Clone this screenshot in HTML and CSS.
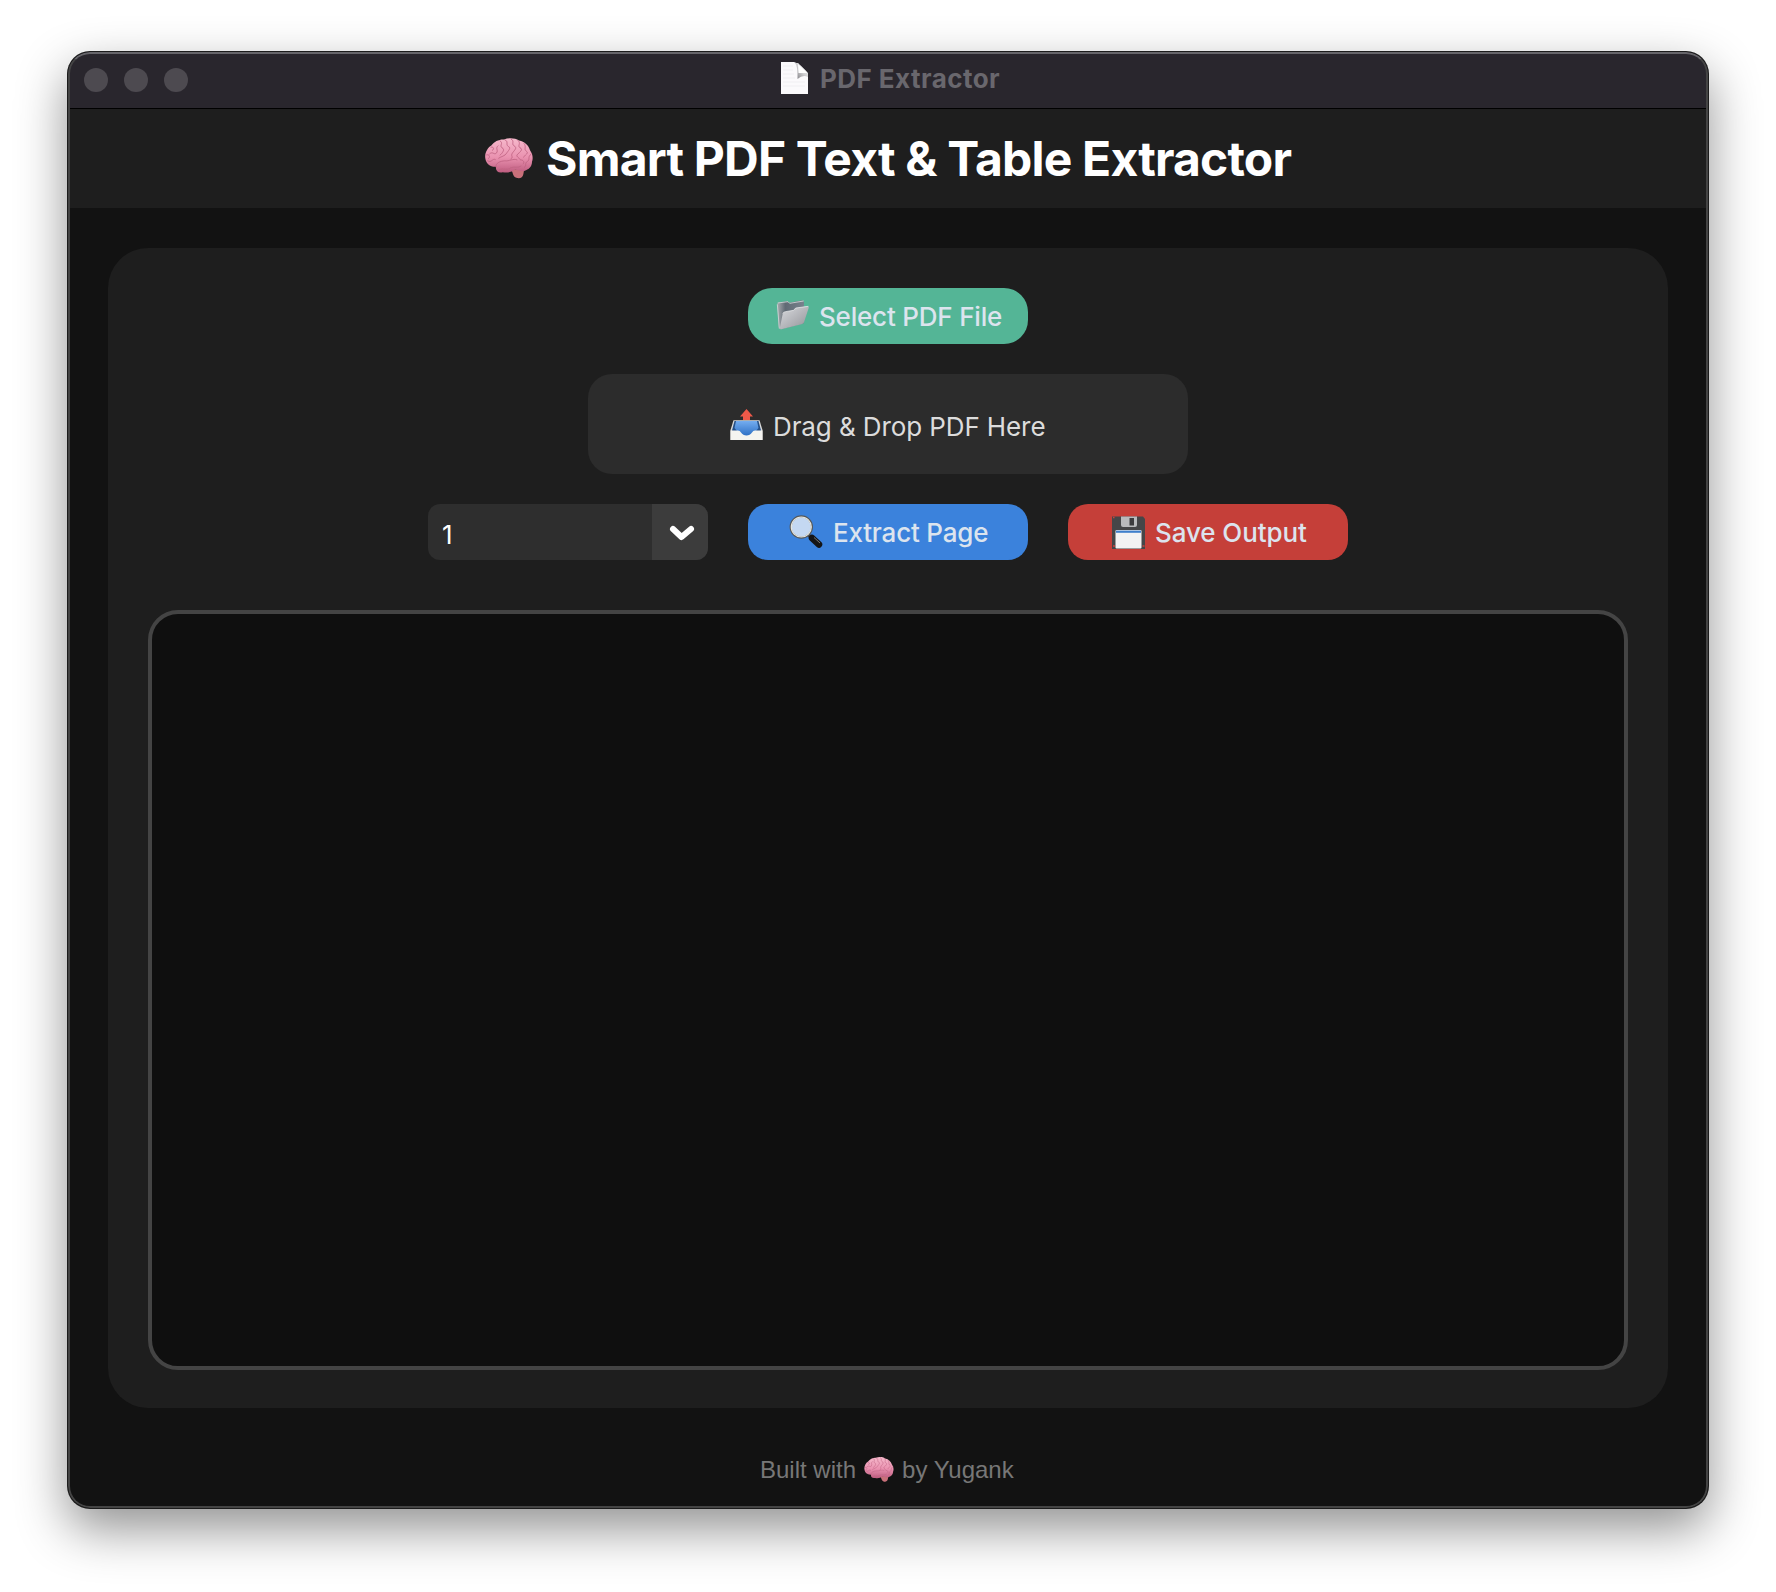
FILE: index.html
```html
<!DOCTYPE html>
<html lang="en">
<head>
<meta charset="utf-8">
<title>PDF Extractor</title>
<link rel="stylesheet" href="styles.css">
</head>
<body>
<svg width="0" height="0" class="defs" aria-hidden="true">
  <defs>
    <linearGradient id="brainFill" x1="0" y1="0" x2="0" y2="1"><stop offset="0" stop-color="#f6b9cc"/><stop offset=".55" stop-color="#ea92b0"/><stop offset="1" stop-color="#bf5d80"/></linearGradient>
    <symbol id="brain" viewBox="0 0 144 122">
      <path d="M78 94C85 104 83 115 94 119C105 123 113 118 115 108L118 92Z" fill="#c9707a"/>
      <path d="M1 61C-2 45 8 28 19 22C28 10 42 3 57 4C72-2 91 0 102 7C119 10 131 22 135 36C143 47 145 60 141 71C141 83 134 93 123 96C113 102 101 97 91 94C78 102 68 105 53 102C40 105 31 98 33 86C15 87 3 76 1 61Z" fill="url(#brainFill)"/>
      <path d="M33 86C31 75 45 69 59 68C72 70 84 60 96 65M41 96C52 87 65 99 77 89C88 84 98 91 108 84M8 68C20 76 22 59 31 64M14 47C23 38 26 51 34 45C42 35 29 32 39 23M45 8C57 15 42 22 51 29C61 33 53 44 45 51M60 5C72 10 61 18 70 25C80 29 69 38 65 45C60 54 48 55 41 60M79 3C90 9 78 17 87 23C99 29 87 37 82 45C76 54 87 56 78 62M99 7C110 16 96 22 105 29C116 33 104 43 98 48C91 55 101 57 105 63M117 16C126 26 115 33 124 39C133 45 119 50 116 57M138 48C126 57 137 64 127 70C117 76 127 81 118 88M106 65C115 65 119 71 115 77M18 27C27 25 28 33 22 37M5 50C14 47 16 58 11 61" fill="none" stroke="#c06584" stroke-width="2.600" stroke-linecap="round"/>
    </symbol>
  </defs>
</svg>
<main class="window">
  <div class="titlebar">
    <div class="lights"><i></i><i></i><i></i></div>
    <div class="caption">
      <svg class="page-icon" viewBox="0 0 27 32"><defs><linearGradient id="fold" x1="0" y1="1" x2="1" y2="0"><stop offset="0" stop-color="#77767a"/><stop offset=".5" stop-color="#cfcfd1"/><stop offset="1" stop-color="#fff"/></linearGradient></defs><path d="M0 0H13Q17 1 20 4L25 9Q27 11 27 15V32H0Z" fill="#fbfafc"/><path d="M14 1Q17 4 16.500 17Q22 12 27 15V11L17 1Z" fill="url(#fold)"/><path d="M17 2L26.500 11H17.500Z" fill="#fff"/><path d="M2 4H12M2 8H12M2 12H13M2 16H14M2 20H24M2 24H24" stroke="#f0eff2" stroke-width="1"/></svg>
      <span class="caption-text">PDF Extractor</span>
    </div>
  </div>
  <header class="header">
    <svg class="brain-lg"><use href="#brain"/></svg>
    <h1>Smart PDF Text &amp; Table Extractor</h1>
  </header>
  <section class="card">
    <button class="btn btn-select">
      <svg class="folder" viewBox="0 0 96 90"><defs><linearGradient id="ff" x1="0" y1="0" x2="1" y2="1"><stop offset="0" stop-color="#d9dade"/><stop offset="1" stop-color="#929398"/></linearGradient><linearGradient id="fb" x1="0" y1="0" x2="1" y2="0"><stop offset="0" stop-color="#a9abaf"/><stop offset=".3" stop-color="#606a74"/><stop offset="1" stop-color="#78838d"/></linearGradient></defs><path d="M1 13Q1 8 7 7L31 4L37 8L75 1Q81 1 81 7V70L11 88Q6 87 5 80Z" fill="url(#fb)"/><path d="M1 13L7 86M2 9L33 5L38 10L80 3" fill="none" stroke="#d3d7da" stroke-width="2.500"/><path d="M17 42Q19 36 25 35L50 31L56 24L91 19Q97 18 95 24L81 67Q79 72 73 73L13 88Q8 89 9 82Z" fill="url(#ff)"/><path d="M17 41Q19 36 25 35L50 31L56 24L94 19" fill="none" stroke="#f0f0f2" stroke-width="2"/></svg>
      <span>Select PDF File</span>
    </button>
    <div class="dropzone">
      <svg class="tray" viewBox="0 0 33 31"><defs><linearGradient id="tb" x1="0" y1="0" x2="0" y2="1"><stop offset="0" stop-color="#74adf0"/><stop offset="1" stop-color="#2d6fc4"/></linearGradient></defs><path d="M3.500 11.300H29.500L32.500 21V31H.500V21Z" fill="#d8d9d9"/><path d="M4.500 12H28.500L31 21.500L24 27H9L2 21.500Z" fill="#244f86"/><path d="M6 12H27L28.500 19L22 27H11L4.500 19Z" fill="url(#tb)"/><path d="M.500 21.500H8Q10 21.500 11 23.500Q13 26.500 16.500 26.500Q20 26.500 22 23.500Q23 21.500 25 21.500H32.500V31H.500Z" fill="#f5f4f0"/><path d="M16.500 0L23 7.500H20V11H13V7.500H10Z" fill="#ee5949"/></svg>
      <span>Drag &amp; Drop PDF Here</span>
    </div>
    <div class="controls">
      <div class="combo">
        <span class="combo-value">1</span>
        <span class="combo-arrow"><svg viewBox="0 0 24 14"><path d="M3 3L11.500 11L21 3" fill="none" stroke="#fff" stroke-width="6" stroke-linecap="round" stroke-linejoin="round"/></svg></span>
      </div>
      <button class="btn btn-extract">
        <svg class="lens" viewBox="0 0 34 34"><path d="M19.500 20L23.500 23.500" stroke="#3c3d3e" stroke-width="3"/><path d="M23 23L30 29.500" stroke="#151515" stroke-width="6.500" stroke-linecap="round"/><path d="M25 22.500L31 28" stroke="#777" stroke-width="1"/><circle cx="12.300" cy="12" r="10.700" fill="#c4d8f2" stroke="#55585a" stroke-width="2"/><circle cx="12.300" cy="12" r="10" fill="none" stroke="#e6e6df" stroke-width="1.200"/></svg>
        <span>Extract Page</span>
      </button>
      <button class="btn btn-save">
        <svg class="floppy" viewBox="0 0 33 33"><path d="M0 .500H31L33 3V33H0Z" fill="#454648"/><path d="M9 .500H25V9Q25 11 23 11H11Q9 11 9 9Z" fill="#b9babc"/><rect x="17.500" y="2" width="4.500" height="7.500" fill="#3c3c3e"/><rect x="3.500" y="14" width="26" height="18.500" rx="1" fill="#f3f3f3"/><path d="M4 15.700H29" stroke="#3f7fcb" stroke-width="2.200"/><path d="M1 30H3M30.500 30H32.500M1 1.500H2.500" stroke="#c9423c" stroke-width="1.500"/></svg>
        <span>Save Output</span>
      </button>
    </div>
    <div class="output"></div>
  </section>
  <footer class="footer">
    <span>Built with</span>
    <svg class="brain-sm"><use href="#brain"/></svg>
    <span>by Yugank</span>
  </footer>
</main>
</body>
</html>
```

FILE: styles.css
```css
* { box-sizing: border-box; }
body {
  margin: 0;
  padding: 52px 68px 84px;
  background: #fff;
  font-family: Inter, "Liberation Sans", sans-serif;
  font-size: 26px;
}
.defs { position: absolute; }
svg { display: block; flex: none; overflow: visible; }
span, h1 { white-space: nowrap; }
.window {
  position: relative;
  display: flex;
  flex-direction: column;
  width: 1640px;
  height: 1456px;
  border-radius: 22px;
  background: #121212;
  box-shadow: 0 0 0 1px #1c1c1c, 0 20px 50px 1px rgba(0, 0, 0, .43);
  overflow: hidden;
}
.window::after {
  content: "";
  position: absolute;
  inset: 0;
  border: 2px solid #444;
  border-top-color: #66656a;
  border-radius: 22px;
  pointer-events: none;
}
.titlebar {
  display: flex;
  height: 57px;
  padding: 0 16px;
  background: #29262d;
  border-bottom: 1px solid #000;
}
.lights { display: flex; gap: 16px; width: 697px; padding-top: 16px; }
.lights i { width: 24px; height: 24px; border-radius: 50%; background: #4d4a50; }
.caption { display: flex; gap: 12px; padding-top: 10px; }
.page-icon { width: 27px; height: 32px; }
.caption-text { padding-top: 1px; font-weight: 700; line-height: 32px; letter-spacing: .45px; color: #69676d; }
.header {
  display: flex;
  height: 99px;
  padding-left: 417px;
  background: #1e1e1e;
}
.brain-lg { width: 48px; height: 41px; margin-top: 29px; }
h1 { margin: 20px 0 0 13px; font-size: 48px; line-height: 60px; font-weight: 700; letter-spacing: -.8px; color: #fff; }
.card {
  display: flex;
  flex-direction: column;
  align-items: center;
  height: 1160px;
  margin: 40px 40px 0;
  padding: 40px;
  border-radius: 40px;
  background: #1e1e1e;
}
.btn {
  display: flex;
  align-items: center;
  width: 280px;
  height: 56px;
  padding: 0;
  border: 0;
  border-radius: 20px;
  font: 450 26px/56px Inter, "Liberation Sans", sans-serif;
  letter-spacing: -.2px;
  color: #dce4ee;
}
.btn span { padding-top: 2px; }
.btn-select { padding-left: 29px; border-radius: 24px; background: #54b596; }
.folder { width: 32px; height: 30px; margin: 0 10px 2px 0; }
.dropzone {
  display: flex;
  width: 600px;
  height: 100px;
  margin: 30px 0;
  padding: 35px 0 0 142px;
  border-radius: 24px;
  background: #2c2c2c;
  color: #dcdcdc;
  line-height: 36px;
  letter-spacing: -.1px;
}
.tray { width: 33px; height: 31px; margin-right: 10px; }
.controls { display: flex; gap: 40px; }
.combo {
  display: flex;
  justify-content: space-between;
  width: 280px;
  height: 56px;
  border-radius: 12px;
  background: #2e2e2e;
  overflow: hidden;
  color: #fff;
}
.combo-value { padding-left: 14px; line-height: 62px; }
.combo-arrow { width: 56px; padding: 22px 0 0 18px; background: #3c3c3c; }
.combo-arrow svg { width: 24px; height: 14px; }
.btn-extract { padding-left: 41px; background: #3b82dc; }
.lens { width: 34px; height: 34px; margin-right: 10px; }
.btn-save { padding-left: 44px; letter-spacing: -.1px; background: #c53f39; }
.floppy { width: 33px; height: 33px; margin-right: 10px; }
.output {
  width: 1480px;
  flex: 1;
  margin: 50px 0 -2px;
  border: 4px solid #444;
  border-radius: 30px;
  background: #0f0f0f;
}
.footer {
  display: flex;
  margin-top: 42px;
  padding-left: 692px;
  font: 24px/40px "Liberation Sans", Arial, sans-serif;
  color: #777;
}
.brain-sm { width: 30px; height: 25px; margin: 7px 8px 0; }
```
